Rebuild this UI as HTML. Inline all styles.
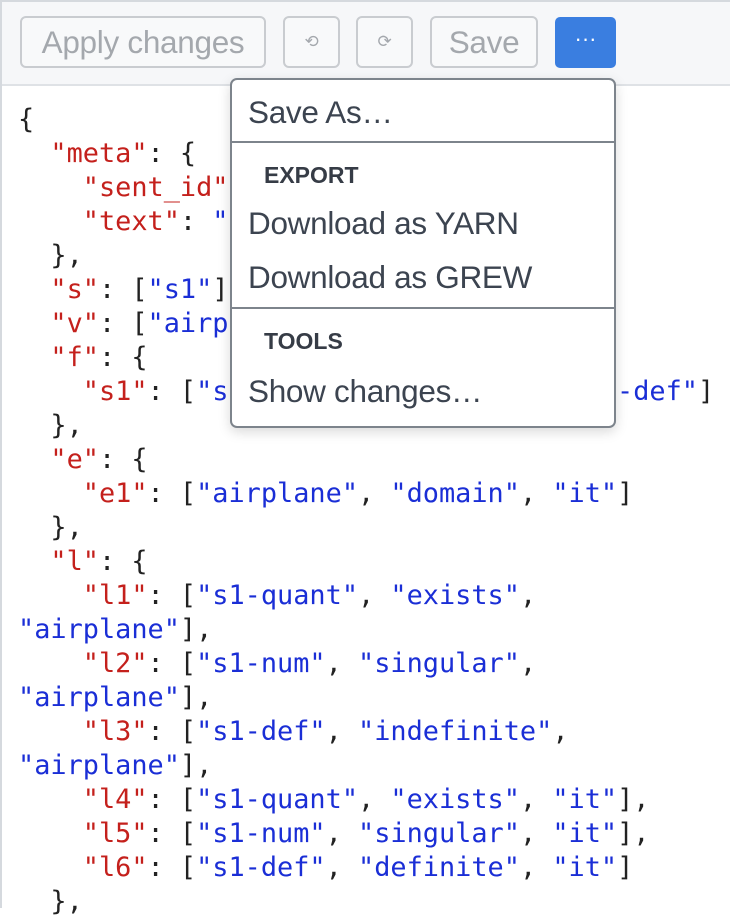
<!DOCTYPE html>
<html><head><style>
body{margin:0;width:730px;height:908px;overflow:hidden;background:#fff;font-family:"Liberation Sans",Helvetica,sans-serif;position:relative}
.frame{position:absolute;left:0;top:0;width:728px;height:906px;border-left:2px solid #d5d9de;border-top:2px solid #d5d9de}
.tb{position:absolute;left:2px;top:2px;right:0;height:82px;background:#f6f7f9;border-bottom:2px solid #dfe2e6}
.btn{position:absolute;top:16px;height:52px;border:2px solid #c9ccd0;border-radius:6px;box-sizing:border-box;color:#a4a8ad;font-size:31.5px;line-height:48px;text-align:center;background:#f8f9fa;letter-spacing:-0.3px}
.blue{position:absolute;left:555px;top:17px;width:61px;height:51px;background:#3a7ee0;border-radius:5px;color:#fff;font-size:22px;text-align:center;line-height:44px}
pre{position:absolute;left:18px;top:103px;margin:0;font-family:"DejaVu Sans Mono","Liberation Mono",monospace;font-size:26.9px;line-height:34px;color:#222}
.k{color:#c4201c}.s{color:#1a2ed6}
.dd{position:absolute;left:230px;top:78px;width:386px;height:350px;box-sizing:border-box;border:2px solid #7d848c;border-radius:7px;background:#fff;box-shadow:0 4px 12px rgba(0,0,0,.15)}
.it{position:absolute;left:16px;font-size:31.5px;color:#3c4450;letter-spacing:-0.3px}
.hd{position:absolute;left:32px;font-size:23px;font-weight:bold;color:#363c46}
.hr{position:absolute;left:0;right:0;height:2px;background:#7d848c}
</style></head><body>
<div class="frame"></div>
<div class="tb"></div>
<div class="btn" style="left:20px;width:246px">Apply changes</div>
<div class="btn" style="left:283px;width:57px;font-size:17px">⟲</div>
<div class="btn" style="left:356px;width:57px;font-size:17px">⟳</div>
<div class="btn" style="left:430px;width:108px">Save</div>
<div class="blue">···</div>
<pre>{
  <span class="k">"meta"</span>: {
    <span class="k">"sent_id"</span>
    <span class="k">"text"</span>: <span class="s">"</span>
  },
  <span class="k">"s"</span>: [<span class="s">"s1"</span>]
  <span class="k">"v"</span>: [<span class="s">"airp</span>
  <span class="k">"f"</span>: {
    <span class="k">"s1"</span>: [<span class="s">"s                        -def"</span>]
  },
  <span class="k">"e"</span>: {
    <span class="k">"e1"</span>: [<span class="s">"airplane"</span>, <span class="s">"domain"</span>, <span class="s">"it"</span>]
  },
  <span class="k">"l"</span>: {
    <span class="k">"l1"</span>: [<span class="s">"s1-quant"</span>, <span class="s">"exists"</span>,
<span class="s">"airplane"</span>],
    <span class="k">"l2"</span>: [<span class="s">"s1-num"</span>, <span class="s">"singular"</span>,
<span class="s">"airplane"</span>],
    <span class="k">"l3"</span>: [<span class="s">"s1-def"</span>, <span class="s">"indefinite"</span>,
<span class="s">"airplane"</span>],
    <span class="k">"l4"</span>: [<span class="s">"s1-quant"</span>, <span class="s">"exists"</span>, <span class="s">"it"</span>],
    <span class="k">"l5"</span>: [<span class="s">"s1-num"</span>, <span class="s">"singular"</span>, <span class="s">"it"</span>],
    <span class="k">"l6"</span>: [<span class="s">"s1-def"</span>, <span class="s">"definite"</span>, <span class="s">"it"</span>]
  },</pre>
<div class="dd">
<div class="it" style="top:14px">Save As…</div>
<div class="hr" style="top:61px"></div>
<div class="hd" style="top:82px">EXPORT</div>
<div class="it" style="top:125px">Download as YARN</div>
<div class="it" style="top:179px">Download as GREW</div>
<div class="hr" style="top:227px"></div>
<div class="hd" style="top:248px">TOOLS</div>
<div class="it" style="top:293px">Show changes…</div>
</div>
</body></html>
